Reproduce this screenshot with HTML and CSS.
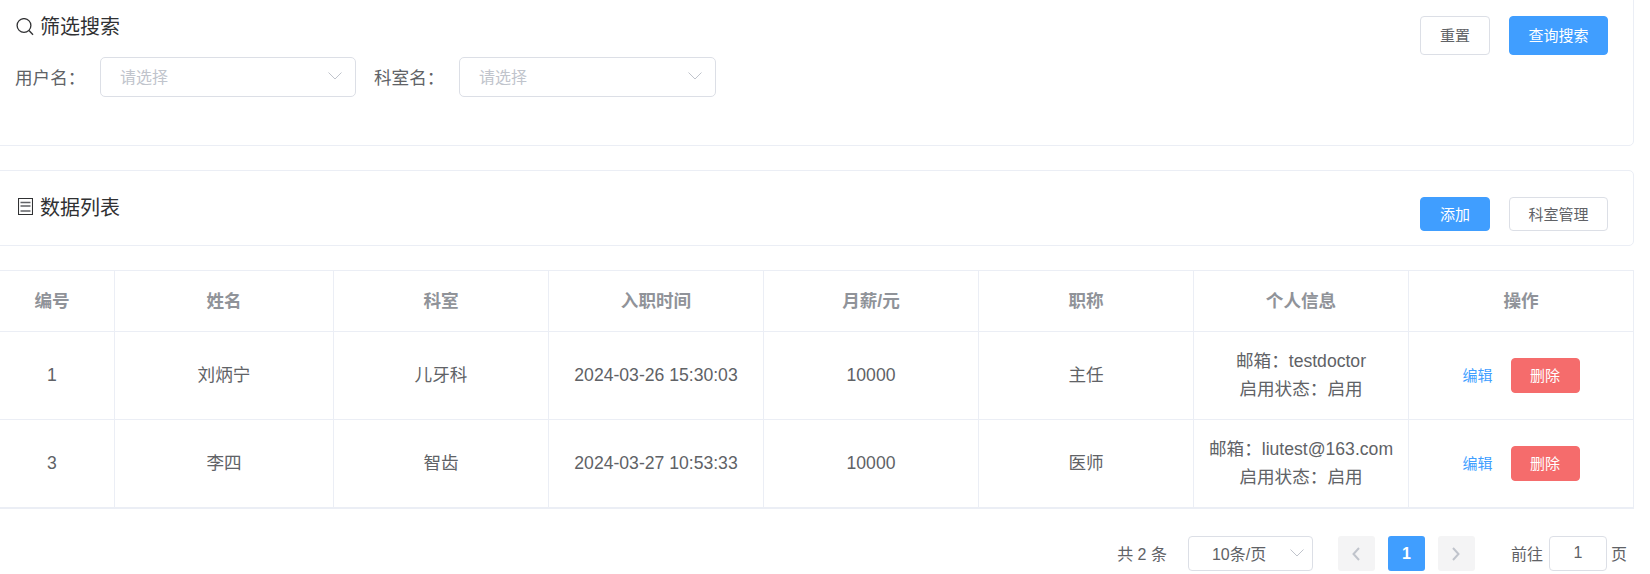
FILE: index.html
```html
<!DOCTYPE html>
<html lang="zh-CN">
<head>
<meta charset="utf-8">
<title>数据列表</title>
<link rel="stylesheet" href="styles.css">
</head>
<body>
<div class="page">
  <section class="card card-search">
    <div class="card-head">
      <div class="title">
        <svg class="title-icon" viewBox="0 0 18 18"><circle cx="8" cy="7.500" r="6.900"/><path d="M13 12.500 17 16.800"/></svg>
        <span>筛选搜索</span>
      </div>
      <div class="actions">
        <button class="btn btn-tall">重置</button>
        <button class="btn btn-tall btn-primary">查询搜索</button>
      </div>
    </div>
    <form class="filters">
      <label class="filter-label">用户名：</label>
      <div class="select"><span>请选择</span><svg class="chevron" viewBox="0 0 14 8"><path d="M.5.5 7 7 13.5.5"/></svg></div>
      <label class="filter-label">科室名：</label>
      <div class="select"><span>请选择</span><svg class="chevron" viewBox="0 0 14 8"><path d="M.5.5 7 7 13.5.5"/></svg></div>
    </form>
  </section>

  <section class="card card-list">
    <div class="card-head">
      <div class="title">
        <svg class="title-icon ticket" viewBox="0 0 15 17"><path d="M.5.5h14v16H.5z"/><path class="ticket-lines" d="M2.500 4.500h10M2.500 8h10M2.500 13h10"/></svg>
        <span>数据列表</span>
      </div>
      <div class="actions">
        <button class="btn btn-primary">添加</button>
        <button class="btn">科室管理</button>
      </div>
    </div>
  </section>

  <table class="table">
    <colgroup>
      <col class="c-id"><col class="c-name"><col class="c-std"><col class="c-std"><col class="c-std"><col class="c-std"><col class="c-std"><col class="c-op">
    </colgroup>
    <thead>
      <tr><th>编号</th><th>姓名</th><th>科室</th><th>入职时间</th><th>月薪/元</th><th>职称</th><th>个人信息</th><th>操作</th></tr>
    </thead>
    <tbody>
      <tr>
        <td>1</td><td>刘炳宁</td><td>儿牙科</td><td>2024-03-26 15:30:03</td><td>10000</td><td>主任</td>
        <td><div>邮箱：testdoctor</div><div>启用状态：启用</div></td>
        <td><div class="ops"><a class="link">编辑</a><button class="btn-danger">删除</button></div></td>
      </tr>
      <tr>
        <td>3</td><td>李四</td><td>智齿</td><td>2024-03-27 10:53:33</td><td>10000</td><td>医师</td>
        <td><div>邮箱：liutest@163.com</div><div>启用状态：启用</div></td>
        <td><div class="ops"><a class="link">编辑</a><button class="btn-danger">删除</button></div></td>
      </tr>
    </tbody>
  </table>

  <nav class="pagination">
    <span class="total">共 2 条</span>
    <div class="sizes"><span>10条/页</span><svg class="chevron" viewBox="0 0 14 8"><path d="M.5.5 7 7 13.5.5"/></svg></div>
    <div class="pages">
      <button class="pg"><svg class="pg-icon" viewBox="0 0 8 14"><path d="M7 1 1.500 7 7 13"/></svg></button>
      <button class="pg pg-active">1</button>
      <button class="pg"><svg class="pg-icon" viewBox="0 0 8 14"><path d="M1 1 6.500 7 1 13"/></svg></button>
    </div>
    <div class="jump"><span>前往</span><div class="jump-input">1</div><span>页</span></div>
  </nav>
</div>
</body>
</html>
```

FILE: styles.css
```css
* { box-sizing: border-box; }
html, body { margin: 0; padding: 0; background: #fff; }
body {
  overflow: hidden;
  height: 574px;
  font-family: "Liberation Sans", "Noto Sans CJK SC", sans-serif;
  font-size: 16px;
  color: #606266;
}
.page { margin: -8px 16px 0 -10px; }

.card {
  border: 1px solid #ebeef5;
  border-radius: 5px;
  background: #fff;
  padding: 0 25px 0 25px;
}
.card-search { height: 154px; padding-top: 23px; margin-bottom: 24px; }
.card-list { height: 76px; padding-top: 26px; margin-bottom: 24px; }

.card-head { display: flex; justify-content: space-between; align-items: flex-start; }
.title {
  display: flex;
  align-items: center;
  gap: 6px;
  height: 22px;
  font-size: 20px;
  line-height: 22px;
  color: #303133;
}
.title-icon {
  width: 18px;
  height: 18px;
  fill: none;
  stroke: #303133;
  stroke-width: 1.3;
}
.ticket { width: 15px; height: 17px; margin: 0 1px 3px 2px; stroke-width: 1.1; }
.ticket-lines { stroke-width: 1.4; stroke: #606266; }

.actions { display: flex; gap: 19px; }
.btn {
  height: 34px;
  min-width: 70px;
  padding: 0 18.5px 2px;
  border: 1px solid #dcdfe6;
  border-radius: 4px;
  background: #fff;
  color: #606266;
  font: inherit;
  font-size: 15px;
}
.btn-tall { height: 39px; }
.btn-primary { background: #409eff; border-color: #409eff; color: #fff; }

.filters { display: flex; align-items: center; margin: 2px 0 0 -1px; }
.filter-label { width: 85px; font-size: 17.6px; padding-bottom: 2px; }
.select {
  display: flex;
  align-items: center;
  justify-content: space-between;
  width: 256px;
  height: 40px;
  margin-right: 18px;
  padding: 0 13px 2px 19px;
  border: 1px solid #dcdfe6;
  border-radius: 5px;
  color: #c0c4cc;
}
.select:last-child { width: 257px; }
.chevron {
  width: 14px;
  height: 8px;
  fill: none;
  stroke: #c0c4cc;
  stroke-width: 1;
}

.table {
  width: 1644px;
  table-layout: fixed;
  border-collapse: separate;
  border-spacing: 0;
  border-top: 1px solid #ebeef5;
  border-bottom: 1px solid #ebeef5;
  font-size: 17.6px;
}
.c-id { width: 125px; }
.c-name { width: 219px; }
.c-std { width: 215px; }
.c-op { width: 225px; }
.table th, .table td {
  padding: 0 0 2px;
  text-align: center;
  vertical-align: middle;
  border-right: 1px solid #ebeef5;
  border-bottom: 1px solid #ebeef5;
}
.table th { height: 61px; padding-bottom: 3px; color: #909399; font-weight: 700; }
.table td { height: 88px; line-height: 28px; }

.ops { display: flex; justify-content: center; align-items: center; gap: 18px; margin-bottom: -2px; }
.link { color: #409eff; font-size: 15px; }
.btn-danger {
  width: 69px;
  height: 34.5px;
  padding: 0;
  border: 1px solid #f56c6c;
  border-radius: 4px;
  background: #f56c6c;
  color: #fff;
  font: inherit;
  font-size: 15px;
}

.pagination {
  display: flex;
  justify-content: flex-end;
  align-items: center;
  height: 35px;
  margin-top: 27px;
  padding-right: 7px;
}
.total { padding-bottom: 2px; }
.sizes {
  display: flex;
  align-items: center;
  justify-content: space-between;
  width: 125px;
  height: 35px;
  margin-left: 21px;
  padding: 0 8px 2px 23px;
  border: 1px solid #dcdfe6;
  border-radius: 4px;
}
.pages { display: flex; gap: 13px; margin-left: 25px; }
.pg {
  display: flex;
  align-items: center;
  justify-content: center;
  width: 37px;
  height: 35px;
  padding: 0;
  border: 0;
  border-radius: 3px;
  background: #f4f4f5;
  font: inherit;
  font-weight: 700;
}
.pg-active { background: #409eff; color: #fff; }
.pg-icon { width: 8px; height: 14px; fill: none; stroke: #c0c4cc; stroke-width: 2; }
.jump { display: flex; align-items: center; gap: 4px; margin-left: 36px; padding-bottom: 2px; }
.jump span:first-child { margin-right: 2px; }
.jump-input {
  width: 58px;
  height: 35px;
  margin-bottom: -2px;
  border: 1px solid #dcdfe6;
  border-radius: 4px;
  text-align: center;
  line-height: 32px;
}
```
